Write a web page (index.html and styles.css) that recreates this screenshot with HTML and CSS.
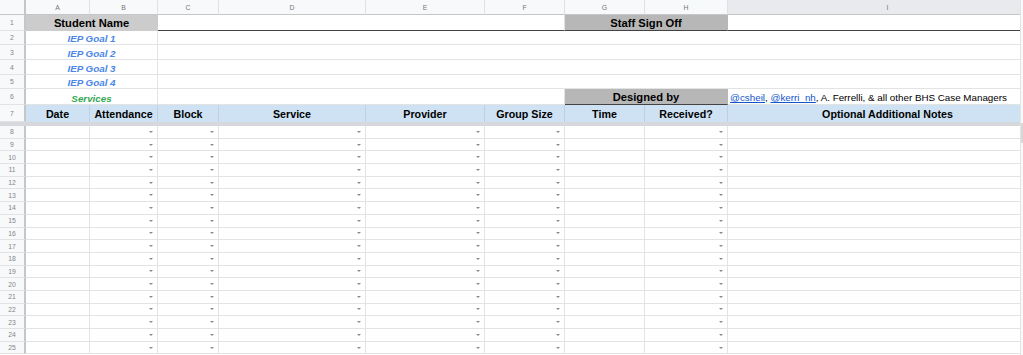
FILE: index.html
```html
<!DOCTYPE html>
<html>
<head>
<title>Service Log</title>
<link rel="stylesheet" href="styles.css">
</head>
<body>

<div class="page">
    <div class="viewport">
        <div class="sheet" id="sheet">
            <!-- Column letters -->
            <div class="corner"></div>
            <div class="col-letter">A</div>
            <div class="col-letter">B</div>
            <div class="col-letter">C</div>
            <div class="col-letter">D</div>
            <div class="col-letter">E</div>
            <div class="col-letter">F</div>
            <div class="col-letter">G</div>
            <div class="col-letter">H</div>
            <div class="col-letter active">I</div>

            <!-- Row 1 -->
            <div class="row-num">1</div>
            <div class="cell span-2 title-gray light">Student Name</div>
            <div class="cell span-4 line-under"></div>
            <div class="cell span-2 title-gray line-under">Staff Sign Off</div>
            <div class="cell line-under"></div>

            <!-- Goals -->
            <div class="row-num">2</div>
            <div class="cell span-2 goal">IEP Goal 1</div>
            <div class="cell span-7"></div>

            <div class="row-num">3</div>
            <div class="cell span-2 goal">IEP Goal 2</div>
            <div class="cell span-7"></div>

            <div class="row-num">4</div>
            <div class="cell span-2 goal">IEP Goal 3</div>
            <div class="cell span-7"></div>

            <div class="row-num">5</div>
            <div class="cell span-2 goal">IEP Goal 4</div>
            <div class="cell span-7"></div>

            <!-- Row 6 -->
            <div class="row-num">6</div>
            <div class="cell span-2 services">Services</div>
            <div class="cell span-4"></div>
            <div class="cell span-2 title-gray line-under">Designed by</div>
            <div class="cell credits"><a href="#">@csheil</a>,&nbsp;<a href="#">@kerri_nh</a>, A. Ferrelli, &amp; all other BHS Case Managers</div>

            <!-- Table header -->
            <div class="row-num">7</div>
            <div class="cell head">Date</div>
            <div class="cell head">Attendance</div>
            <div class="cell head">Block</div>
            <div class="cell head">Service</div>
            <div class="cell head">Provider</div>
            <div class="cell head">Group Size</div>
            <div class="cell head">Time</div>
            <div class="cell head">Received?</div>
            <div class="cell head">Optional Additional Notes</div>

            <div class="freeze"></div>
        </div>
    </div>

    <div class="scrollbar">
        <div class="thumb"></div>
    </div>
</div>

<script>
// log rows 8-25, dropdown on every column except Date, Time and Notes
const dropdownCols = [false, true, true, true, true, true, false, true, false];
const sheet = document.getElementById("sheet");

for (let row = 8; row <= 25; row++) {
    const num = document.createElement("div");
    num.className = "row-num";
    num.textContent = row;
    sheet.appendChild(num);

    dropdownCols.forEach(hasDropdown => {
        const cell = document.createElement("div");
        cell.className = hasDropdown ? "cell log dd" : "cell log";
        sheet.appendChild(cell);
    });
}
</script>

</body>
</html>
```

FILE: styles.css
```css
:root {
  --grid-line: #e2e3e3;
  --header-bg: #f8f9fa;
  --header-line: #c4c7c5;
  --gray-title: #b7b7b7;
  --gray-light: #cccccc;
  --blue-head: #cfe2f3;
  --goal-blue: #4a86e8;
  --services-green: #34a853;
}

* {
    box-sizing: border-box;
}

body {
    margin: 0;
    font-family: 'Liberation Sans', Arial, sans-serif;
    background: white;
    color: #000;
    overflow: hidden;
}

.page {
    display: flex;
    width: 1023px;
    height: 355px;
    overflow: hidden;
}

/* column I runs on past the visible edge */
.viewport {
    width: 1020px;
    overflow: hidden;
}

.sheet {
    display: grid;
    width: 1048px;
    grid-template-columns: 26px 64px 68px 61px 147px 119px 80px 80px 83px 320px;
    grid-template-rows: 15px 16px 14px 15px 15px 14px 16px 17px 4px;
    grid-auto-rows: 12.7px;
}

/* column letters */
.corner {
    background: var(--header-bg);
    border-right: 2px solid #c6c6c6;
    border-bottom: 1px solid var(--header-line);
}

.col-letter {
    background: var(--header-bg);
    border-right: 1px solid #dfe1e3;
    border-bottom: 1px solid var(--header-line);
    color: #70757a;
    font-size: 6.8px;
    display: flex;
    align-items: center;
    justify-content: center;
}

.col-letter.active {
    background: #e8eaed;
}

/* row numbers */
.row-num {
    background: var(--header-bg);
    border-right: 2px solid #c6c6c6;
    border-bottom: 1px solid #e3e3e3;
    color: #80868b;
    font-size: 6.8px;
    display: flex;
    align-items: center;
    justify-content: center;
}

/* cells */
.cell {
    border-right: 1px solid var(--grid-line);
    border-bottom: 1px solid var(--grid-line);
    display: flex;
    align-items: flex-end;
    justify-content: center;
    padding: 0 2px 0;
    font-size: 9.8px;
    line-height: 1;
    white-space: nowrap;
    overflow: hidden;
}

.span-2 { grid-column: span 2; }
.span-4 { grid-column: span 4; }
.span-7 { grid-column: span 7; }

.title-gray {
    background: var(--gray-title);
    font-size: 11.2px;
    font-weight: bold;
    border-right-color: var(--gray-title);
    padding-bottom: 1px;
}

.title-gray.light {
    background: var(--gray-light);
    border-color: var(--gray-light);
}

.line-under {
    border-bottom: 1px solid #434343;
}

.goal {
    color: var(--goal-blue);
    font-style: italic;
    font-weight: bold;
}

.services {
    color: var(--services-green);
    font-style: italic;
    font-weight: bold;
}

.credits {
    justify-content: flex-start;
    padding-left: 2px;
    padding-bottom: 1px;
}

.credits a {
    color: #1155cc;
}

.head {
    background: var(--blue-head);
    border-right-color: #bfd0e1;
    border-bottom-color: var(--blue-head);
    font-size: 10.7px;
    font-weight: bold;
    padding-bottom: 1px;
}

.freeze {
    grid-column: span 10;
    background: #d6d8db;
}

.log {
    align-items: center;
    padding: 0;
}

.dd {
    justify-content: flex-end;
    padding-right: 4px;
}

.dd::after {
    content: "";
    border-left: 2px solid transparent;
    border-right: 2px solid transparent;
    border-top: 2.5px solid #8a8a8a;
}

/* right hand scroll strip */
.scrollbar {
    width: 3px;
    border-left: 1px solid #e3e3e3;
    background: #f8f9fa;
    padding-top: 123px;
}

.thumb {
    height: 20px;
    background: #d8d8d8;
}
```
